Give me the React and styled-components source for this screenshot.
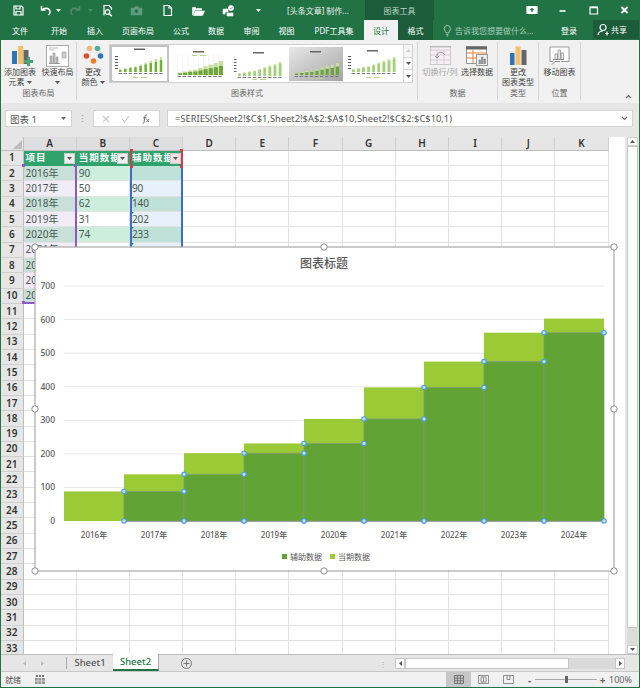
import React from "react";
import styled, { createGlobalStyle, css } from "styled-components";

const FONT = `"Noto Sans", "Noto Sans CJK SC", sans-serif`;
const GREEN = "#217346";
const DARK = "#1d5c3b";

const Global = createGlobalStyle`
  html, body { margin: 0; padding: 0; background: #e6e6e6; }
  * { box-sizing: border-box; }
`;

const Window = styled.div`
  width: 640px; height: 688px; overflow: hidden; display: flex; flex-direction: column;
  border: 1px solid ${GREEN}; border-top: 0; background: #e6e6e6; font-family: ${FONT}; color: #444;
`;

/* ---------- title ---------- */
const TitleBar = styled.div`height: 20px; flex: none; background: ${GREEN}; display: flex; align-items: center; color: #fff; margin: 0 -1px;`;
const Slot = styled.div`
  width: ${p => p.$w}px; flex: none; height: 100%; display: flex; align-items: center; justify-content: center;
  background: ${p => p.$bg || "transparent"}; color: ${p => p.$c || "inherit"}; font-size: ${p => p.$fs || 8}px;
`;
const DocTitle = styled.div`width: 78px; flex: none; font-size: 8px; color: #e8f1ec; white-space: nowrap;`;
const TabsBar = styled.div`height: 20px; flex: none; background: ${GREEN}; display: flex; align-items: stretch; color: #fff; margin: 0 -1px;`;
const Tab = styled.div`
  width: ${p => p.$w}px; flex: none; display: flex; align-items: center; justify-content: center; font-size: 8px;
  white-space: nowrap;
  background: ${p => p.$active ? "#f1f1f1" : p.$dark ? DARK : "transparent"};
  color: ${p => p.$active ? GREEN : "#fff"};
`;
const Hint = styled.div`flex: 1; display: flex; align-items: center; gap: 3px; padding-left: 10px; font-size: 8px; color: #a9cdb9; white-space: nowrap;`;
const Share = styled.div`width: 47px; flex: none; height: 19px; background: ${DARK}; display: flex; align-items: center; gap: 2px; padding-left: 4px; font-size: 8px; color: #fff;`;

/* ---------- ribbon ---------- */
const Ribbon = styled.div`height: 63px; flex: none; background: #f1f1f1; display: flex; align-items: stretch;`;
const Group = styled.div`
  width: ${p => p.$w}px; flex: none; display: flex; flex-direction: column; border-right: 1px solid #d6d6d6; margin: 2px 0 3px;
`;
const GroupBody = styled.div`flex: 1; display: flex; align-items: flex-start; padding-top: 2px; padding-left: ${p => p.$pl || 0}px;`;
const GroupLabel = styled.div`height: 13px; flex: none; font-size: 8px; line-height: 11px; text-align: center; color: #666;`;
const RBtn = styled.div`
  width: ${p => p.$w}px; flex: none; display: flex; flex-direction: column; align-items: center;
  font-size: 8px; color: ${p => p.$off ? "#a6a6a6" : "#444"}; white-space: nowrap; text-align: center;
`;
const RIcon = styled.div`height: 23px; flex: none; display: flex; align-items: center; justify-content: center;`;
const RLine = styled.div`height: 10px; line-height: 10px; flex: none; display: flex; align-items: center; gap: 2px;`;
const Gallery = styled.div`width: 304px; height: 39px; flex: none; display: flex; background: #fff; border: 1px solid #d0d0d0;`;
const ThumbCell = styled.div`
  width: ${p => p.$w}px; flex: none; height: 100%; background: #fff; display: flex; align-items: center; justify-content: center;
  border: ${p => p.$sel ? "2px solid #c2c2c2" : "0"};
`;
const GalleryScroll = styled.div`flex: 1; display: flex; flex-direction: column; border-left: 1px solid #d6d6d6; background: #f6f6f6;`;
const GalleryBtn = styled.div`flex: 1; display: flex; align-items: center; justify-content: center; border-bottom: 1px solid #d6d6d6; background: ${p => p.$on ? "#fff" : "transparent"}; &:last-child { border-bottom: 0; }`;
const Collapse = styled.div`flex: 1; display: flex; align-items: flex-end; justify-content: flex-end; padding: 0 7px 4px 0;`;

/* ---------- formula ---------- */
const FormulaBar = styled.div`height: 27px; flex: none; display: flex; align-items: center; padding: 7px 6px 3px 4px; background: #e6e6e6;`;
const NameBox = styled.div`width: 67px; height: 17px; flex: none; background: #fff; border: 1px solid #d4d4d4; display: flex; align-items: center; justify-content: space-between; padding: 0 5px 0 4px; font-size: 9.5px; color: #555;`;
const Dots = styled.div`width: 21px; flex: none; display: flex; justify-content: center; color: #999; font-size: 9px;`;
const FxBox = styled.div`width: 67px; height: 17px; flex: none; background: #fff; border: 1px solid #d4d4d4; display: flex; align-items: center; justify-content: space-around; padding: 0 3px;`;
const Formula = styled.div`flex: 1; margin-left: 7px; height: 17px; background: #fff; border: 1px solid #d4d4d4; display: flex; align-items: center; justify-content: space-between; padding: 0 4px 0 7px; font-size: 9.35px; color: #555; white-space: nowrap;`;

/* ---------- sheet ---------- */
const gridTemplate = css`
  display: grid; grid-template-columns: 22.5px repeat(11, 53.2px);
  grid-template-rows: 13.6px repeat(33, 15.33px);
`;
const SheetArea = styled.div`height: 524px; flex: none; padding-top: 7px; display: flex; overflow: hidden;`;
const GridWrap = styled.div`width: 624px; flex: none; position: relative; overflow: hidden; height: 517px; background: #fff;`;
const Grid = styled.div`${gridTemplate}`;
const RangeLayer = styled.div`${gridTemplate} position: absolute; left: 0; top: 0; pointer-events: none;`;
const Corner = styled.div`background: #e6e6e6; border-right: 1px solid #bdbdbd; border-bottom: 1px solid #bdbdbd; display: flex; align-items: flex-end; justify-content: flex-end; padding: 1px;`;
const ColHead = styled.div`
  background: ${p => p.$sel ? "#dedede" : "#e6e6e6"}; border-right: 1px solid #cfcfcf; border-bottom: 1px solid #bdbdbd;
  display: flex; align-items: center; justify-content: center; font-size: 10px; line-height: 13px; font-weight: 600; color: #333;
`;
const RowHead = styled.div`
  background: #e6e6e6; border-right: 1px solid #bdbdbd; border-bottom: 1px solid #cfcfcf;
  display: flex; align-items: center; justify-content: center; font-size: 10px; line-height: 13px; font-weight: 600; color: #333;
`;
const Cell = styled.div`
  background: ${p => p.$bg || "#fff"}; border-right: 1px solid #e2e2e2; border-bottom: 1px solid #e2e2e2;
  display: flex; align-items: center; padding-left: 2px; font-size: 10px; line-height: 13px; color: #4a5a52; white-space: nowrap; overflow: hidden;
  position: relative;
`;
const HeadCell = styled(Cell)`background: #2fa36b; color: #fff; font-weight: 700; letter-spacing: 1px; padding-left: 2px; font-size: 9.5px; border-color: #2fa36b;`;
const Filter = styled.div`
  position: absolute; right: 1px; top: 2px; width: 11px; height: 11px; background: ${p => p.$pink ? "#f3dfe2" : "#eee"};
  border: 1px solid #ccc; display: flex; align-items: center; justify-content: center;
`;
const Tick = styled.div`position: absolute; left: 1px; top: 0; width: 0; height: 0; border-top: 3px solid #1a8a3a; border-right: 3px solid transparent;`;
const RangeBox = styled.div`
  grid-column: ${p => p.$col}; grid-row: ${p => p.$row}; position: relative;
  border: ${p => p.$c} solid; border-width: ${p => p.$bw};
`;
const Pin = styled.div`
  position: absolute; width: 3px; height: 3px; background: ${p => p.$c};
  ${p => p.$right ? "right: -2px;" : "left: -2px;"}
  ${p => p.$bottom ? "bottom: -2px;" : "top: -2px;"}
`;
const ChartLayer = styled.svg`position: absolute; left: 29px; top: 105px; display: block; font-family: ${FONT};`;

const VScroll = styled.div`width: 11px; flex: none; margin-left: 2px; height: 517px; background: #dcdcdc; display: flex; flex-direction: column;`;
const VThumb = styled.div`height: 482px; flex: none; background: #fff; border: 1px solid #c6c6c6;`;
const VSpacer = styled.div`flex: 1;`;
const VBtn = styled.div`height: 9px; flex: none; background: #fff; border: 1px solid #d0d0d0; display: flex; align-items: center; justify-content: center;`;

/* ---------- sheet tabs ---------- */
const SheetBar = styled.div`height: 18px; flex: none; display: flex; align-items: stretch; background: #e6e6e6; border-top: 1px solid #bdbdbd; border-bottom: 1px solid #c8c8c8;`;
const NavArrows = styled.div`width: 66px; flex: none; display: flex; align-items: center; justify-content: center; gap: 15px; border-right: 1px solid #aaa; margin: 2px 0;`;
const SheetTab = styled.div`
  width: 46px; flex: none; display: flex; align-items: center; justify-content: center; font-size: 9.5px; font-weight: 500; margin-top: -1px;
  color: ${p => p.$active ? GREEN : "#555"}; background: ${p => p.$active ? "#fff" : "transparent"};
  border-bottom: ${p => p.$active ? `2px solid ${GREEN}` : "0"}; border-right: ${p => p.$active ? "1px solid #aaa" : "0"};
`;
const AddSheet = styled.div`width: 33px; flex: none; display: flex; align-items: center; justify-content: flex-end;`;
const Grip = styled.div`width: 203px; flex: none; padding-right: 8px; display: flex; align-items: center; justify-content: flex-end; color: #aaa; font-size: 8px;`;
const HScroll = styled.div`width: 230px; flex: none; display: flex; margin: 3px 0 2px; background: #d9d9d9;`;
const HBtn = styled.div`width: 10px; flex: none; background: #fff; border: 1px solid #c6c6c6; display: flex; align-items: center; justify-content: center;`;
const HThumb = styled.div`width: 164px; flex: none; background: #fff; border: 1px solid #c6c6c6;`;
const HFill = styled.div`flex: 1;`;

/* ---------- status ---------- */
const StatusBar = styled.div`flex: 1; display: flex; align-items: center; font-size: 8px; color: #555; background: #f1f1f1; overflow: hidden;`;
const Ready = styled.div`width: 34px; flex: none; padding-left: 4px; line-height: 12px;`;
const StatusFill = styled.div`flex: 1;`;
const ViewBtn = styled.div`width: 25px; height: 100%; flex: none; display: flex; align-items: center; justify-content: center; background: ${p => p.$on ? "#c6c6c6" : "transparent"};`;
const Zoomer = styled.div`width: 85px; flex: none; display: flex; align-items: center; gap: 2px; padding-left: 5px;`;
const ZoomSign = styled.span`font-size: 10px; font-weight: 700; color: #666; line-height: 8px; width: 7px; text-align: center;`;
const ZoomTrack = styled.div`flex: 1; height: 1px; background: #aaa; display: flex; justify-content: center; align-items: center;`;
const ZoomThumb = styled.div`width: 3px; height: 7px; background: #666;`;
const Percent = styled.div`width: 33px; flex: none; font-size: 9px; padding-left: 3px; color: #666; line-height: 12px;`;

/* ---------- drawings ---------- */
const W = ({ w = 13, h = 13, children, fill = "none", stroke = "#fff", sw = 1.2 }) => (
  <svg width={w} height={h} viewBox={`0 0 ${w} ${h}`} fill={fill} stroke={stroke} strokeWidth={sw}>{children}</svg>
);
const SaveIcon = () => <W><path d="M2 2h7.500L11 3.500V11H2z" /><path d="M4 2v3h4V2M4 11V7.500h5V11" /></W>;
const UndoIcon = ({ c = "#fff" }) => <W stroke={c} sw={1.5}><path d="M2.500 2v4h4" /><path d="M3 6c2-2.600 7-2.600 8 1 .4 1.600-.4 3-1.500 4" /></W>;
const RedoIcon = ({ c }) => <W stroke={c} sw={1.5}><path d="M10.500 2v4h-4" /><path d="M10 6C8 3.400 3 3.400 2 7c-.4 1.600.4 3 1.500 4" /></W>;
const Caret = ({ c = "#fff" }) => <svg width="5" height="3" viewBox="0 0 5 3"><path d="M0 0h5L2.500 3z" fill={c} /></svg>;
const CaretUp = ({ c }) => <svg width="5" height="3" viewBox="0 0 5 3"><path d="M0 3h5L2.500 0z" fill={c} /></svg>;
const PreviewIcon = () => <W><path d="M3 11.500V1.500h5L10.500 4v2" /><circle cx="6.500" cy="8" r="2.300" /><path d="M8.300 9.800l2.500 2.500" strokeWidth="1.600" /></W>;
const CameraIcon = () => <W stroke="#5f9b7c" fill="#5f9b7c" sw={0.5}><path d="M1 4h3l1-1.500h3L9 4h3v7H1z" /><circle cx="6.500" cy="7.300" r="2" fill={GREEN} /></W>;
const NewIcon = () => <W><path d="M3 1.500h5l2.500 2.500v7.500H3z" /><path d="M8 1.500V4h2.500" /></W>;
const OpenIcon = () => <W w={14} stroke="#fff" fill="#fff" sw={0.6}><path d="M1.500 3.500h3l1 1h5V6H4L2 11H1.500z" /><path d="M4.500 7h9L11.500 11.500H2.500z" /></W>;
const ShareIcon = () => <W w={14} fill="#fff" stroke="#fff" sw={0.6}><path d="M2 5h5v3H4v2H2z" /><circle cx="10" cy="4" r="2.600" /><path d="M6 9h6v3H6z" /><path d="M8.700 4l1 1 1.600-1.800" stroke={GREEN} fill="none" /></W>;
const DisplayIcon = () => <W w={12}><path d="M1 2.500h10v7H1z" fill="#fff" /><path d="M6 8V4.500M4.500 6L6 4.500 7.500 6" stroke={GREEN} /></W>;
const MinIcon = () => <W w={12}><path d="M2.500 7h6" strokeWidth="1.600" /></W>;
const MaxIcon = () => <W w={12}><path d="M2 3h7.500v7H2z" /><path d="M2 3.500h7.500" strokeWidth="1.600" /></W>;
const CloseIcon = () => <W w={12} sw={1.800}><path d="M2.500 3l6 6M8.500 3l-6 6" /></W>;
const Bulb = () => <W w={9} stroke="#a9cdb9" sw={0.9}><path d="M3 9c0-1.500-1.700-2.200-1.700-4.500a3 3 0 016 0C7.300 6.800 5.800 7.500 5.800 9z" /><path d="M3.300 10.600h2.200M3.600 12h1.600" /></W>;
const UserIcon = () => <W w={12}><circle cx="6" cy="4.500" r="3" /><path d="M1 12c.4-3 2-4 5-4M8 10.500h4M10 8.500v4" /></W>;

const Bars = () => (
  <svg width="30" height="22" viewBox="0 0 30 22">
    <rect x="7" y="6" width="5" height="13" fill="#2e75b6" />
    <rect x="13" y="1" width="5" height="18" fill="#f2c26b" />
    <rect x="18.500" y="5" width="5" height="14" fill="#666" />
    <path d="M22 12h3v3h3v3h-3v3h-3v-3h-3v-3h3z" fill="#4ea27a" />
  </svg>
);
const BarsPlain = () => (
  <svg width="18" height="19" viewBox="0 0 18 19">
    <rect x="1" y="7" width="4.500" height="12" fill="#2e75b6" /><rect x="6.500" y="0.500" width="5" height="18.500" fill="#f2c26b" /><rect x="12.500" y="4" width="5" height="15" fill="#666" />
  </svg>
);
const QuickLayout = () => (
  <svg width="23" height="22" viewBox="0 0 23 22">
    <rect x="0.500" y="0.500" width="22" height="21" fill="#fff" stroke="#aaa" />
    <path d="M3 3h9M3 5h5" stroke="#bbb" />
    <path d="M4 18V11h2v7M7 18V8h2v10M10 18v-6h2v6" fill="#bbb" stroke="#999" strokeWidth=".6" />
    <path d="M3 18.500h11" stroke="#999" />
    <rect x="16" y="7" width="4" height="6" fill="#ccc" stroke="#999" strokeWidth=".6" />
  </svg>
);
const ColorIcon = () => (
  <svg width="22" height="21" viewBox="0 0 22 21">
    <circle cx="7.500" cy="3.500" r="2.800" fill="#f2b77c" /><circle cx="15.500" cy="3.500" r="2.800" fill="#5ba99b" />
    <circle cx="4.500" cy="11" r="2.800" fill="#d9532c" /><circle cx="18.500" cy="11" r="2.800" fill="#2e75b6" />
    <circle cx="11.500" cy="16" r="2.800" fill="#ed7d31" />
  </svg>
);
const SwitchIcon = () => (
  <svg width="21" height="19" viewBox="0 0 21 19" fill="none">
    <rect x="0.500" y="0.500" width="20" height="18" fill="#f7eef2" stroke="#c8c8c8" />
    <path d="M0 4h21M7 4v15M14 4v15M0 9h21M0 14h21" stroke="#d8ccd2" />
    <path d="M0 0.500h21" stroke="#bbb" strokeWidth="2" />
    <path d="M13 7a4 4 0 00-6 2v3M5 10l2 2 2-2M15 9l-2-2" stroke="#999" />
  </svg>
);
const SelectDataIcon = () => (
  <svg width="22" height="20" viewBox="0 0 22 20" fill="none">
    <rect x="0.500" y="0.500" width="20" height="17" fill="#fff" stroke="#999" />
    <path d="M0 2h21" stroke="#666" strokeWidth="3" />
    <path d="M1 7h19M1 12h10M7 4v14" stroke="#ed7d31" />
    <path d="M14 4v5" stroke="#ddd" />
    <rect x="10.500" y="8.500" width="11" height="11" fill="#eee" stroke="#999" />
    <path d="M13 18v-4h1.500v4M15.500 18v-7H17v7M18 18v-5h1.500v5" fill="#999" stroke="#777" strokeWidth=".5" />
  </svg>
);
const MoveIcon = () => (
  <svg width="21" height="19" viewBox="0 0 21 19" fill="none">
    <path d="M4 15.500H1V1h19v14.500h-8" fill="#fff" stroke="#999" />
    <path d="M6 13V8h2.500v5M9 13V4h2.500v9M12 13V7h2.500v6" fill="#e8e8e8" stroke="#888" strokeWidth=".7" />
    <path d="M4 13.500h11" stroke="#888" />
    <path d="M3 18.500l3-3h5" stroke="#888" />
  </svg>
);

const THUMBS = {
  1: { base: 25, max: 15, bw: 2.4, main: "#6fb23a", f: .8, title: 1.5, legend: 30 },
  2: { base: 28, max: 14, bw: 4.2, main: "#6fa63c", f: .65, title: 4, legend: 8 },
  3: { base: 29, max: 14, bw: 2.6, main: "#a5cf7f", f: .85, title: 5, legend: 32 },
  4: { base: 28, max: 12, bw: 3.2, main: "#6aa33a", f: .7, title: 4, legend: 31 },
  5: { base: 25, max: 15, bw: 2.6, main: "#a5cf7f", f: .85, title: 3, legend: 30 },
};
const STEPS = [.18, .25, .33, .38, .5, .63, .75, .85, 1];

const Thumb = ({ kind }) => {
  const t = THUMBS[kind];
  return (
    <svg width="54" height="34" viewBox="0 0 54 34">
      <defs>
        <linearGradient id="thumbGrad" x1="0" y1="0" x2="1" y2="1"><stop offset="0" stopColor="#e8e8e8" /><stop offset="1" stopColor="#a4a4a4" /></linearGradient>
      </defs>
      <rect width="54" height="34" fill={kind === 4 ? "url(#thumbGrad)" : "#fff"} />
      <rect x="21" y={t.title} width="11" height="1.500" fill="#666" />
      {(kind === 1 || kind === 5) && [9, 12, 15, 18, 21].map(y => <rect key={y} x="2" y={y} width="3" height="1" fill="#555" />)}
      {kind === 3 && [12, 15, 18, 21, 24].map(y => <rect key={y} x="2" y={y} width="2.500" height="1" fill="#666" />)}
      {STEPS.map((s, i) => {
        const x = 6 + i * 5.1, h = s * t.max;
        return (
          <g key={i}>
            {kind === 2 && <rect x={x - .5} y="7" width=".5" height={t.base - 7} fill="#e8e8e8" />}
            <rect x={x} y={t.base - h} width={t.bw} height={h} fill="#c7df9c" />
            <rect x={x} y={t.base - h * t.f} width={t.bw} height={h * t.f} fill={t.main} />
            <rect x={x - .5} y={t.base + 1} width={3.4} height={1} fill="#777" />
          </g>
        );
      })}
      <rect x="20" y={t.legend} width="5" height="1" fill="#b9d68a" />
      <rect x="28" y={t.legend} width="6" height="1" fill="#b9d68a" />
    </svg>
  );
};

/* chart */
const Y0 = 521, UNIT = 0.3357;
const yOf = v => Y0 - v * UNIT;
const YEARS = ["2016年", "2017年", "2018年", "2019年", "2020年", "2021年", "2022年", "2023年", "2024年"];
const DARKV = [0, 88, 139, 202, 231, 304, 398, 475, 561];
const TOPV = [88, 139, 202, 231, 304, 398, 475, 561, 603];
const X0 = 64, STEP = 60;

const ChartSvg = () => {
  const handles = [];
  DARKV.forEach((v, i) => {
    if (i === 0) return;
    const xl = X0 + i * STEP, xr = xl + STEP;
    handles.push([xl, yOf(v)], [xl, Y0], [xr, yOf(v)], [xr, Y0]);
  });
  const corners = [[35, 247], [324, 247], [614, 247], [35, 409], [614, 409], [35, 571], [324, 571], [614, 571]];
  return (
    <ChartLayer width="590" height="334" viewBox="30 242 590 334">
      <rect x="35" y="247" width="579" height="324" fill="#fff" stroke="#a8a8a8" strokeWidth="1.200" />
      <text x="324" y="268" textAnchor="middle" fontSize="12" fontWeight="500" fill="#595959">图表标题</text>
      {[100, 200, 300, 400, 500, 600, 700].map(v => <line key={v} x1={X0} x2={604} y1={yOf(v)} y2={yOf(v)} stroke="#e8e8e8" />)}
      {[0, 100, 200, 300, 400, 500, 600, 700].map(v => <text key={v} x="55" y={yOf(v) + 3} textAnchor="end" fontSize="8.500" fontWeight="500" fill="#595959">{v}</text>)}
      {YEARS.map((y, i) => (
        <g key={y}>
          <rect x={X0 + i * STEP} y={yOf(TOPV[i])} width={STEP} height={yOf(DARKV[i]) - yOf(TOPV[i])} fill="#9acb37" />
          {i > 0 && <rect x={X0 + i * STEP} y={yOf(DARKV[i])} width={STEP} height={Y0 - yOf(DARKV[i])} fill="#62a336" stroke="#7f9a6c" strokeWidth=".8" />}
          <text x={X0 + i * STEP + 30} y="538" textAnchor="middle" fontSize="8" fontWeight="500" fill="#595959">{y}</text>
        </g>
      ))}
      <line x1={X0 + STEP} x2="604" y1={Y0 + .5} y2={Y0 + .5} stroke="#a0a0a0" />
      {handles.map(([x, y], i) => <circle key={i} cx={x} cy={y} r="2.200" fill="#bfe0f7" stroke="#4a9be0" strokeWidth="1.100" />)}
      <rect x="282" y="554" width="5" height="5" fill="#62a336" />
      <text x="290" y="559.500" fontSize="8" fill="#595959">辅助数据</text>
      <rect x="330" y="554" width="5" height="5" fill="#9acb37" />
      <text x="338" y="559.500" fontSize="8" fill="#595959">当期数据</text>
      {corners.map(([x, y]) => <circle key={`${x}-${y}`} cx={x} cy={y} r="3.200" fill="#fff" stroke="#8c8c8c" strokeWidth="1" />)}
    </ChartLayer>
  );
};

const COLS = ["A", "B", "C", "D", "E", "F", "G", "H", "I", "J", "K"];
const DATA = [
  ["2016年", "90", ""], ["2017年", "50", "90"], ["2018年", "62", "140"], ["2019年", "31", "202"], ["2020年", "74", "233"],
  ["2021年", "", ""], ["2022年", "", ""], ["2023年", "", ""], ["2024年", "", ""],
];
const tint = (c, r) => {
  const odd = r % 2 === 0;
  if (c === 0) return odd ? "#c8e0d8" : "#f1ecf8";
  if (c === 1) return odd ? "#cdeedd" : "#ffffff";
  if (c === 2) return odd ? "#bfe2d8" : "#e8f0fb";
  return "#fff";
};

const FilterBtn = ({ pink }) => <Filter $pink={pink}><Caret c="#555" /></Filter>;
const Pins = ({ c }) => (
  <>
    <Pin $c={c} /><Pin $c={c} $right /><Pin $c={c} $bottom /><Pin $c={c} $right $bottom />
  </>
);

const tabs = [["文件", 40], ["开始", 38], ["插入", 34], ["页面布局", 52], ["公式", 34], ["数据", 36], ["审阅", 35], ["视图", 35], ["PDF工具集", 60]];

export default function App() {
  return (
    <>
      <Global />
      <Window>
        <TitleBar>
          <Slot $w={37}><SaveIcon /></Slot>
          <Slot $w={16}><UndoIcon /></Slot>
          <Slot $w={11}><Caret /></Slot>
          <Slot $w={22}><RedoIcon c="#4f8e6e" /></Slot>
          <Slot $w={8}><Caret c="#4f8e6e" /></Slot>
          <Slot $w={27}><PreviewIcon /></Slot>
          <Slot $w={31}><CameraIcon /></Slot>
          <Slot $w={31}><NewIcon /></Slot>
          <Slot $w={30}><OpenIcon /></Slot>
          <Slot $w={29}><ShareIcon /></Slot>
          <Slot $w={33}><Caret /></Slot>
          <Slot $w={12} />
          <DocTitle>[头条文章] 制作...</DocTitle>
          <Slot $w={69} $bg={DARK} $c="#b8d4c5">图表工具</Slot>
          <Slot $w={82} />
          <Slot $w={31}><DisplayIcon /></Slot>
          <Slot $w={31}><MinIcon /></Slot>
          <Slot $w={31}><MaxIcon /></Slot>
          <Slot $w={31}><CloseIcon /></Slot>
        </TitleBar>
        <TabsBar>
          {tabs.map(([t, w]) => <Tab key={t} $w={w}>{t}</Tab>)}
          <Tab $w={34} $active>设计</Tab>
          <Tab $w={35} $dark>格式</Tab>
          <Hint><Bulb />告诉我您想要做什么...</Hint>
          <Tab $w={48}>登录</Tab>
          <Share><UserIcon />共享</Share>
        </TabsBar>

        <Ribbon>
          <Group $w={76}>
            <GroupBody>
              <RBtn $w={38}><RIcon><Bars /></RIcon><RLine>添加图表</RLine><RLine>元素 <Caret c="#555" /></RLine></RBtn>
              <RBtn $w={37}><RIcon><QuickLayout /></RIcon><RLine>快速布局</RLine><RLine><Caret c="#555" /></RLine></RBtn>
            </GroupBody>
            <GroupLabel>图表布局</GroupLabel>
          </Group>
          <Group $w={341}>
            <GroupBody>
              <RBtn $w={32}><RIcon><ColorIcon /></RIcon><RLine>更改</RLine><RLine>颜色 <Caret c="#555" /></RLine></RBtn>
              <Gallery>
                <ThumbCell $w={59} $sel><Thumb kind={1} /></ThumbCell>
                <ThumbCell $w={60}><Thumb kind={2} /></ThumbCell>
                <ThumbCell $w={60}><Thumb kind={3} /></ThumbCell>
                <ThumbCell $w={54}><Thumb kind={4} /></ThumbCell>
                <ThumbCell $w={60}><Thumb kind={5} /></ThumbCell>
                <GalleryScroll>
                  <GalleryBtn><CaretUp c="#ccc" /></GalleryBtn>
                  <GalleryBtn $on><Caret c="#555" /></GalleryBtn>
                  <GalleryBtn $on><Caret c="#555" /></GalleryBtn>
                </GalleryScroll>
              </Gallery>
            </GroupBody>
            <GroupLabel>图表样式</GroupLabel>
          </Group>
          <Group $w={80}>
            <GroupBody $pl={3}>
              <RBtn $w={38} $off><RIcon><SwitchIcon /></RIcon><RLine>切换行/列</RLine></RBtn>
              <RBtn $w={36}><RIcon><SelectDataIcon /></RIcon><RLine>选择数据</RLine></RBtn>
            </GroupBody>
            <GroupLabel>数据</GroupLabel>
          </Group>
          <Group $w={41}>
            <GroupBody>
              <RBtn $w={40}><RIcon><BarsPlain /></RIcon><RLine>更改</RLine><RLine>图表类型</RLine></RBtn>
            </GroupBody>
            <GroupLabel>类型</GroupLabel>
          </Group>
          <Group $w={42}>
            <GroupBody>
              <RBtn $w={41}><RIcon><MoveIcon /></RIcon><RLine>移动图表</RLine></RBtn>
            </GroupBody>
            <GroupLabel>位置</GroupLabel>
          </Group>
          <Collapse><svg width="7" height="5" viewBox="0 0 7 5" fill="none" stroke="#666" strokeWidth="1.100"><path d="M1 4l2.500-2.500L6 4" /></svg></Collapse>
        </Ribbon>

        <FormulaBar>
          <NameBox>图表 1<Caret c="#666" /></NameBox>
          <Dots>⋮</Dots>
          <FxBox>
            <svg width="8" height="8" viewBox="0 0 8 8" stroke="#c8c8c8" strokeWidth="1.100"><path d="M1 1l6 6M7 1L1 7" /></svg>
            <svg width="9" height="8" viewBox="0 0 9 8" fill="none" stroke="#c8c8c8" strokeWidth="1.100"><path d="M1 4l2.500 3L8 1" /></svg>
            <svg width="10" height="10" viewBox="0 0 10 10" fill="none" stroke="#666" strokeWidth=".9"><path d="M6 1C4.500.5 4 1.500 3.800 3L3 8.500C2.800 9.500 2 9.500 1.500 9M2 3.800h3.500M5.500 5l2.500 3M8 5L5.500 8" /></svg>
          </FxBox>
          <Formula>=SERIES(Sheet2!$C$1,Sheet2!$A$2:$A$10,Sheet2!$C$2:$C$10,1)
            <svg width="7" height="5" viewBox="0 0 7 5" fill="none" stroke="#666" strokeWidth="1.100"><path d="M1 1l2.500 2.500L6 1" /></svg>
          </Formula>
        </FormulaBar>

        <SheetArea>
          <GridWrap>
            <Grid>
              <Corner><svg width="9" height="9" viewBox="0 0 9 9"><path d="M9 0v9H0z" fill="#bdbdbd" /></svg></Corner>
              {COLS.map((c, i) => <ColHead key={c} $sel={i < 3}>{c}</ColHead>)}
              {Array.from({ length: 33 }).map((_, r) => (
                <React.Fragment key={r}>
                  <RowHead>{r + 1}</RowHead>
                  {COLS.map((c, i) => {
                    if (r === 0 && i < 3) {
                      return (
                        <HeadCell key={c}>
                          {["项目", "当期数据", "辅助数据"][i]}
                          <FilterBtn pink={i === 2} />
                        </HeadCell>
                      );
                    }
                    const row = r >= 1 && r <= 9 ? DATA[r - 1] : null;
                    return (
                      <Cell key={c} $bg={row ? tint(i, r - 1) : "#fff"}>
                        {row && i === 2 && r >= 3 && <Tick />}
                        {row && i < 3 ? row[i] : ""}
                      </Cell>
                    );
                  })}
                </React.Fragment>
              ))}
            </Grid>
            <RangeLayer>
              <RangeBox $col="2" $row="3 / 12" $c="#8e5bc4" $bw="0 2px 2px 0"><Pins c="#8e5bc4" /></RangeBox>
              <RangeBox $col="4" $row="3 / 12" $c="#3a6fc9" $bw="0 2px 2px 2px"><Pins c="#3a6fc9" /></RangeBox>
              <RangeBox $col="4" $row="2 / 3" $c="#c8414b" $bw="0 2px 0 2px"><Pins c="#c8414b" /></RangeBox>
            </RangeLayer>
            <ChartSvg />
          </GridWrap>
          <VScroll>
            <VBtn><CaretUp c="#555" /></VBtn>
            <VThumb />
            <VSpacer />
            <VBtn><Caret c="#555" /></VBtn>
          </VScroll>
        </SheetArea>

        <SheetBar>
          <NavArrows>
            <svg width="3" height="5" viewBox="0 0 3 5"><path d="M3 0v5L0 2.500z" fill="#bbb" /></svg>
            <svg width="3" height="5" viewBox="0 0 3 5"><path d="M0 0v5l3-2.500z" fill="#bbb" /></svg>
          </NavArrows>
          <SheetTab>Sheet1</SheetTab>
          <SheetTab $active>Sheet2</SheetTab>
          <AddSheet>
            <svg width="11" height="11" viewBox="0 0 11 11" fill="none" stroke="#777"><circle cx="5.500" cy="5.500" r="5" /><path d="M5.500 2.500v6M2.500 5.500h6" /></svg>
          </AddSheet>
          <Grip>⋮</Grip>
          <HScroll>
            <HBtn><svg width="3" height="5" viewBox="0 0 3 5"><path d="M3 0v5L0 2.500z" fill="#555" /></svg></HBtn>
            <HThumb />
            <HFill />
            <HBtn><svg width="3" height="5" viewBox="0 0 3 5"><path d="M0 0v5l3-2.500z" fill="#555" /></svg></HBtn>
          </HScroll>
        </SheetBar>

        <StatusBar>
          <Ready>就绪</Ready>
          <svg width="10" height="9" viewBox="0 0 10 9"><path d="M0 3h10v6H0z" fill="#999" /><path d="M1 0h2v2H1zM4 0h2v2H4zM7 0h2v2H7z" fill="#777" /><path d="M3 3v6M6.500 3v6M0 6h10" stroke="#eee" strokeWidth=".6" /></svg>
          <StatusFill />
          <ViewBtn $on>
            <svg width="10" height="9" viewBox="0 0 10 9" fill="none" stroke="#666" strokeWidth=".8"><path d="M.5.500h9v8h-9zM.5 3.200h9M.5 5.800h9M3.500.5v8M6.500.5v8" /></svg>
          </ViewBtn>
          <ViewBtn>
            <svg width="11" height="9" viewBox="0 0 11 9" fill="none" stroke="#777" strokeWidth=".8"><path d="M.5.500h10v8H.5z" /><path d="M3 2h5v5H3zM5.500 2v5" /></svg>
          </ViewBtn>
          <ViewBtn>
            <svg width="11" height="9" viewBox="0 0 11 9" fill="none" stroke="#777" strokeWidth=".8"><path d="M.5.500h10v8H.5z" /><path d="M4 .5v4h3v-4" /></svg>
          </ViewBtn>
          <Zoomer>
            <ZoomSign>-</ZoomSign>
            <ZoomTrack><ZoomThumb /></ZoomTrack>
            <ZoomSign>+</ZoomSign>
          </Zoomer>
          <Percent>100%</Percent>
        </StatusBar>
      </Window>
    </>
  );
}
